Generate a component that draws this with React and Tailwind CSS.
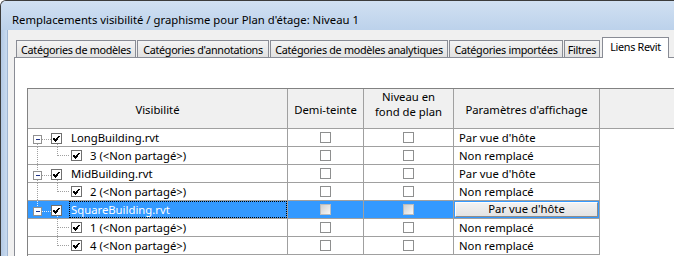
import React from "react";

const rows = [
  { level: 0, name: "LongBuilding.rvt", param: "Par vue d'hôte", first: true, hasNext: true },
  { level: 1, name: "3 (<Non partagé>)", param: "Non remplacé", parentHasNext: true, last: true },
  { level: 0, name: "MidBuilding.rvt", param: "Par vue d'hôte", hasNext: true },
  { level: 1, name: "2 (<Non partagé>)", param: "Non remplacé", parentHasNext: true, last: true },
  { level: 0, name: "SquareBuilding.rvt", param: "Par vue d'hôte", hasNext: false, selected: true },
  { level: 1, name: "1 (<Non partagé>)", param: "Non remplacé", parentHasNext: false, last: false },
  { level: 1, name: "4 (<Non partagé>)", param: "Non remplacé", parentHasNext: false, last: true },
];

function Check({ x, y }) {
  return (
    <g>
      <rect x={x + 0.5} y={y + 0.5} width="10" height="10" fill="#fff" stroke="#6f6f6f" />
      <path
        d={`M${x + 2.5} ${y + 5.5} L${x + 4.5} ${y + 7.8} L${x + 8.6} ${y + 2.6}`}
        stroke="#000"
        strokeWidth="1.8"
        fill="none"
      />
    </g>
  );
}

function TopGlyph({ first, hasNext, selected }) {
  const dot = selected ? "#e4eefa" : "#a0a0a0";
  return (
    <svg width="41" height="17" className="shrink-0" shapeRendering="crispEdges">
      {!first && <line x1="9.5" y1="0" x2="9.5" y2="6" stroke={dot} strokeDasharray="1 1" />}
      {hasNext && <line x1="9.5" y1="15" x2="9.5" y2="17" stroke={dot} strokeDasharray="1 1" />}
      <rect x="5.5" y="6.5" width="8" height="8" fill="#fff" stroke="#919191" />
      <line x1="7.5" y1="10.5" x2="11.5" y2="10.5" stroke="#1e3287" />
      <line x1="14" y1="10.5" x2="23" y2="10.5" stroke={dot} strokeDasharray="1 1" />
      <Check x={23} y={4} />
      <line x1="29.5" y1="15" x2="29.5" y2="17" stroke={dot} strokeDasharray="1 1" />
    </svg>
  );
}

function ChildGlyph({ parentHasNext, last }) {
  const dot = "#a0a0a0";
  return (
    <svg width="62" height="17" className="shrink-0" shapeRendering="crispEdges">
      {parentHasNext && <line x1="9.5" y1="0" x2="9.5" y2="17" stroke={dot} strokeDasharray="1 1" />}
      <line x1="29.5" y1="0" x2="29.5" y2={last ? 9 : 17} stroke={dot} strokeDasharray="1 1" />
      <line x1="30" y1="8.5" x2="42" y2="8.5" stroke={dot} strokeDasharray="1 1" />
      <Check x={43} y={3} />
    </svg>
  );
}

function Box({ selected }) {
  return selected ? (
    <span className="w-[11px] h-[11px] border border-[#bcbcbc] bg-gradient-to-br from-[#cfcfcf] to-[#f7f7f7]" />
  ) : (
    <span className="w-[11px] h-[11px] border border-[#8e8f8f] bg-white" />
  );
}

const tabs = [
  { label: "Catégories de modèles", w: "w-[120px]", ml: "" },
  { label: "Catégories d'annotations", w: "w-[132px]", ml: "ml-[1px]" },
  { label: "Catégories de modèles analytiques", w: "w-[178px]", ml: "ml-[1px]" },
  { label: "Catégories importées", w: "w-[114px]", ml: "ml-[1px]" },
  { label: "Filtres", w: "w-[36px]", ml: "ml-[1px]" },
];

export default function App() {
  return (
    <div className="w-[674px] h-[256px] overflow-hidden bg-white font-['Noto_Sans',sans-serif] text-[11.3px] text-black">
      <div className="h-full flex flex-col border-l border-t border-[#3c3c3c] rounded-tl-[6px] bg-[#c4d7ed] overflow-hidden">
        <div className="h-[29px] shrink-0 pl-[11px] pt-[11px] leading-[16px] whitespace-nowrap bg-gradient-to-b from-[#d1e0f2] to-[#bcd2eb]">
          Remplacements visibilité / graphisme pour Plan d'étage: Niveau 1
        </div>
        <div className="flex-1 flex min-h-0">
          <div className="w-[7px] shrink-0 bg-gradient-to-r from-[#b3c9e4] to-[#c8daef] border-r border-[#9fb5d1]" />
          <div className="flex-1 bg-[#f0f0f0] flex flex-col min-w-0">
            <div className="h-[27px] shrink-0 pt-[7px] pl-[8px] flex items-end whitespace-nowrap text-[10.8px] tracking-[-0.3px]">
              {tabs.map((t) => (
                <div
                  key={t.label}
                  className={`${t.w} ${t.ml} h-[17px] shrink-0 border-t border-l border-r border-[#898c95] bg-gradient-to-b from-[#f4f4f4] to-[#e1e1e1] flex justify-center pt-[1px] leading-[15px]`}
                >
                  {t.label}
                </div>
              ))}
              <div className="w-[67px] ml-[2px] h-[21px] shrink-0 border-t border-l border-r border-[#898c95] bg-white relative z-10 mb-[-1px] flex justify-center leading-[15px] pt-[1px]">
                Liens Revit
              </div>
            </div>
            <div className="flex-1 ml-[6px] border-t border-l border-[#898c95] bg-white pt-[30px] pl-[12px] min-h-0">
              <div className="h-full border-l border-t border-[#828282] flex flex-col">
                <div className="h-[40px] shrink-0 flex border-b border-[#a0a0a0] bg-[#f0f0f0]">
                  <div className="w-[260px] shrink-0 border-r border-[#a0a0a0] flex items-center justify-center leading-[15px] pt-[2px]">
                    Visibilité
                  </div>
                  <div className="w-[76px] shrink-0 border-r border-[#a0a0a0] flex items-center justify-center leading-[15px] pt-[2px]">
                    Demi-teinte
                  </div>
                  <div className="w-[90px] shrink-0 border-r border-[#a0a0a0] flex flex-col items-center leading-[15px]">
                    <span>Niveau en</span>
                    <span>fond de plan</span>
                  </div>
                  <div className="w-[146px] shrink-0 border-r border-[#a0a0a0] flex items-center justify-center leading-[15px] pt-[2px]">
                    Paramètres d'affichage
                  </div>
                  <div className="flex-1" />
                </div>
                {rows.map((r) => (
                  <div
                    key={r.name}
                    className={`h-[18px] w-[572px] shrink-0 flex border-b border-[#a0a0a0] leading-[17px] whitespace-nowrap ${
                      r.selected ? "bg-[#3399ff] text-white" : ""
                    }`}
                  >
                    <div className="w-[260px] shrink-0 border-r border-[#a0a0a0] flex items-center">
                      {r.level === 0 ? (
                        <>
                          <TopGlyph first={r.first} hasNext={r.hasNext} selected={r.selected} />
                          <span
                            className={`flex-1 h-[17px] pl-[1px] border border-dotted ${
                              r.selected ? "border-black" : "border-transparent"
                            } leading-[15px]`}
                          >
                            {r.name}
                          </span>
                        </>
                      ) : (
                        <>
                          <ChildGlyph parentHasNext={r.parentHasNext} last={r.last} />
                          <span>{r.name}</span>
                        </>
                      )}
                    </div>
                    <div className="w-[76px] shrink-0 border-r border-[#a0a0a0] flex items-center justify-center">
                      <Box selected={r.selected} />
                    </div>
                    <div className="w-[90px] shrink-0 border-r border-[#a0a0a0] flex items-center justify-center">
                      <Box selected={r.selected} />
                    </div>
                    <div className="w-[146px] shrink-0 border-r border-[#a0a0a0] flex items-start">
                      {r.selected ? (
                        <div className="ml-[1px] mt-[1px] w-[143px] h-[15px] border border-t-[#fdfdfd] border-l-[#fdfdfd] border-r-[#8c8c8c] border-b-[#8c8c8c] bg-gradient-to-b from-[#f2f2f2] to-[#e3e3e3] text-black flex justify-center leading-[12px]">
                          {r.param}
                        </div>
                      ) : (
                        <span className="pl-[5px]">{r.param}</span>
                      )}
                    </div>
                  </div>
                ))}
              </div>
            </div>
          </div>
        </div>
      </div>
    </div>
  );
}
